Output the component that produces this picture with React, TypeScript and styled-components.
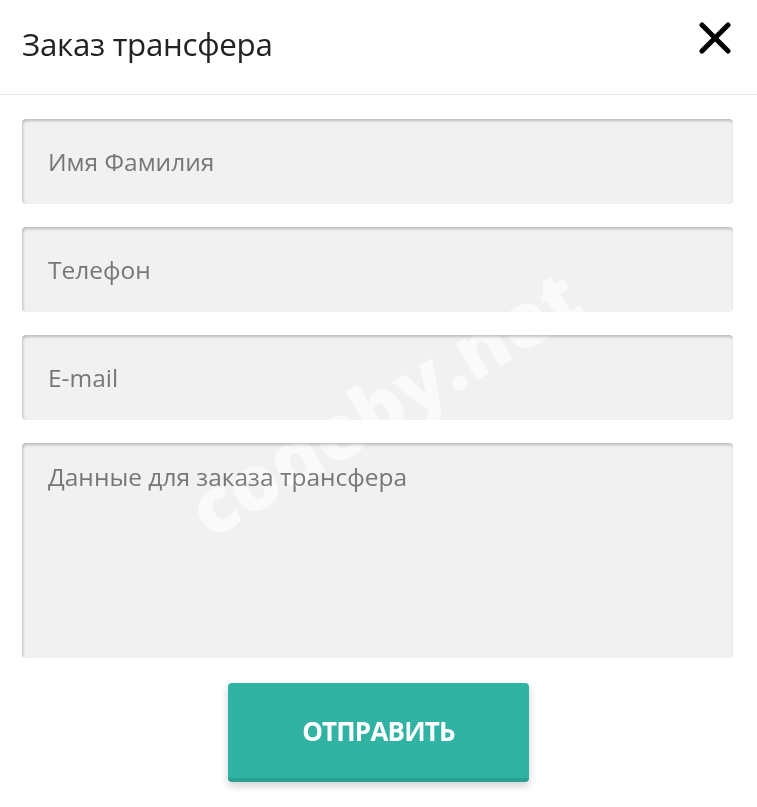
import React from "react";
import styled, { createGlobalStyle } from "styled-components";

const GlobalStyle = createGlobalStyle`
  html, body {
    margin: 0;
    padding: 0;
    background: #ffffff;
  }
  body {
    font-family: "Open Sans", "Noto Sans", sans-serif;
  }
  * {
    box-sizing: border-box;
  }
`;

const Modal = styled.div`
  position: relative;
  width: 757px;
  min-height: 807px;
  background: #ffffff;
  overflow: hidden;
`;

const Header = styled.div`
  display: flex;
  align-items: center;
  justify-content: space-between;
  height: 95px;
  padding: 0 24px 6px 22px;
  border-bottom: 1px solid #e6e6e6;
`;

const Title = styled.h2`
  margin: 0;
  font-size: 31.3px;
  font-weight: 400;
  letter-spacing: -0.3px;
  color: #222222;
`;

const CloseButton = styled.button`
  display: flex;
  align-items: center;
  justify-content: center;
  width: 36px;
  height: 36px;
  margin-bottom: 13px;
  padding: 0;
  border: none;
  background: transparent;
  cursor: pointer;
`;

const Form = styled.form`
  display: flex;
  flex-direction: column;
  gap: 23px;
  padding: 24px 24px 0 22px;
`;

const fieldBase = `
  width: 100%;
  border: none;
  outline: none;
  border-radius: 4px;
  background: #f1f1f1;
  box-shadow: inset 1px 2px 3px rgba(0, 0, 0, 0.22);
  font-family: "Open Sans", "Noto Sans", sans-serif;
  font-size: 24.5px;
  color: #444;
  padding-left: 26px;
  &::placeholder {
    color: #777777;
  }
`;

const Input = styled.input`
  ${fieldBase}
  height: 85px;
`;

const TextArea = styled.textarea`
  ${fieldBase}
  height: 215px;
  padding-top: 17px;
  resize: none;
`;

const ButtonRow = styled.div`
  display: flex;
  justify-content: center;
  padding-top: 2px;
  padding-left: 2px;
`;

const SubmitButton = styled.button`
  width: 301px;
  height: 99px;
  border: none;
  border-radius: 4px;
  background: #30b3a3;
  border-bottom: 4px solid #2aa090;
  box-shadow: 0 4px 8px rgba(0, 0, 0, 0.18);
  color: #ffffff;
  font-family: "Open Sans", "Noto Sans", sans-serif;
  font-size: 26px;
  font-weight: 700;
  letter-spacing: -0.8px;
  text-transform: uppercase;
  cursor: pointer;
`;

/* light overlay that brightens the grey fields but leaves dark text alone */
const Watermark = styled.div`
  position: absolute;
  left: 384px;
  top: 402px;
  transform: translate(-50%, -50%) rotate(-31deg);
  font-family: "Open Sans", "Noto Sans", sans-serif;
  font-size: 77px;
  font-weight: 800;
  color: rgb(9, 9, 9);
  mix-blend-mode: color-dodge;
  white-space: nowrap;
  pointer-events: none;
  user-select: none;
`;

const CloseIcon = () => (
  <svg width="32" height="32" viewBox="0 0 32 32">
    <path
      d="M3 3 L29 29 M29 3 L3 29"
      stroke="#000"
      strokeWidth="5"
      strokeLinecap="round"
    />
  </svg>
);

export default function App() {
  return (
    <>
      <GlobalStyle />
      <Modal>
        <Header>
          <Title>Заказ трансфера</Title>
          <CloseButton type="button" aria-label="Закрыть">
            <CloseIcon />
          </CloseButton>
        </Header>
        <Form onSubmit={(e) => e.preventDefault()}>
          <Input placeholder="Имя Фамилия" />
          <Input placeholder="Телефон" />
          <Input placeholder="E-mail" />
          <TextArea placeholder="Данные для заказа трансфера" />
          <ButtonRow>
            <SubmitButton type="submit">Отправить</SubmitButton>
          </ButtonRow>
        </Form>
        <Watermark>codeby.net</Watermark>
      </Modal>
    </>
  );
}
